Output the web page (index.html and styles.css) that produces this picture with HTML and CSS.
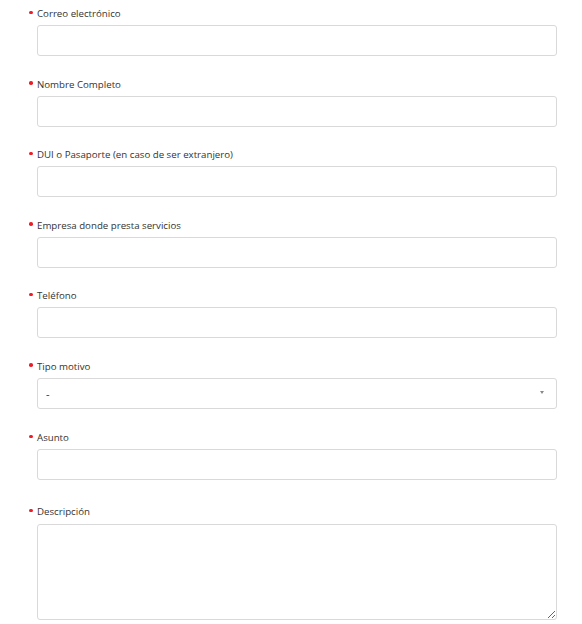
FILE: index.html
```html
<!DOCTYPE html>
<html lang="es">
<head>
<meta charset="utf-8">
<title>Formulario</title>
<link rel="stylesheet" href="styles.css">
</head>
<body>
<form class="form">
  <div class="field">
    <label class="label"><span class="req"></span>Correo electrónico</label>
    <input class="control" type="text">
  </div>
  <div class="field">
    <label class="label"><span class="req"></span>Nombre Completo</label>
    <input class="control" type="text">
  </div>
  <div class="field">
    <label class="label"><span class="req"></span>DUI o Pasaporte (en caso de ser extranjero)</label>
    <input class="control" type="text">
  </div>
  <div class="field">
    <label class="label"><span class="req"></span>Empresa donde presta servicios</label>
    <input class="control" type="text">
  </div>
  <div class="field">
    <label class="label"><span class="req"></span>Teléfono</label>
    <input class="control" type="text">
  </div>
  <div class="field field-select">
    <label class="label"><span class="req"></span>Tipo motivo</label>
    <div class="select">
      <span class="select-value">-</span>
      <span class="select-arrow"></span>
    </div>
  </div>
  <div class="field field-wide">
    <label class="label"><span class="req"></span>Asunto</label>
    <input class="control" type="text">
  </div>
  <div class="field">
    <label class="label label-area"><span class="req"></span>Descripción</label>
    <textarea class="control area"></textarea>
  </div>
</form>
</body>
</html>
```

FILE: styles.css
```css
html, body {
  margin: 0;
  padding: 0;
  background: #ffffff;
}
body {
  font-family: "Open Sans", "Liberation Sans", sans-serif;
  font-size: 9.7px;
  color: #333333;
}
.form {
  padding: 6px 25px 0 29px;
  display: flex;
  flex-direction: column;
}
.field {
  display: flex;
  flex-direction: column;
  margin-bottom: 20.5px;
}
.field-select {
  margin-bottom: 21.5px;
}
.field-wide {
  margin-bottom: 24px;
}
.label {
  display: flex;
  align-items: flex-start;
  height: 14px;
  line-height: 14px;
  padding-top: 1px;
  margin-bottom: 4px;
  color: #333333;
}
.label-area {
  margin-bottom: 5px;
}
.req {
  width: 3.5px;
  height: 3.5px;
  border-radius: 50%;
  background: #ee1c25;
  margin: 3.5px 4.5px 0 0;
  flex: none;
}
.control {
  box-sizing: border-box;
  margin: 0 0 0 8px;
  width: 520px;
  height: 31px;
  border: 1px solid #d9d9d9;
  border-radius: 3px;
  background: #fff;
  font: inherit;
  outline: none;
  padding: 4px 8px;
}
.area {
  height: 96px;
  resize: vertical;
  display: block;
}
.select {
  box-sizing: border-box;
  margin-left: 8px;
  width: 520px;
  height: 31px;
  border: 1px solid #d9d9d9;
  border-radius: 3px;
  display: flex;
  align-items: center;
  justify-content: space-between;
  padding: 0 12px 0 8px;
}
.select-value {
  font-size: 11px;
  color: #333;
}
.select-arrow {
  width: 0;
  height: 0;
  border-left: 2.5px solid transparent;
  border-right: 2.5px solid transparent;
  border-top: 3px solid #888;
  margin-top: -2px;
}
```
